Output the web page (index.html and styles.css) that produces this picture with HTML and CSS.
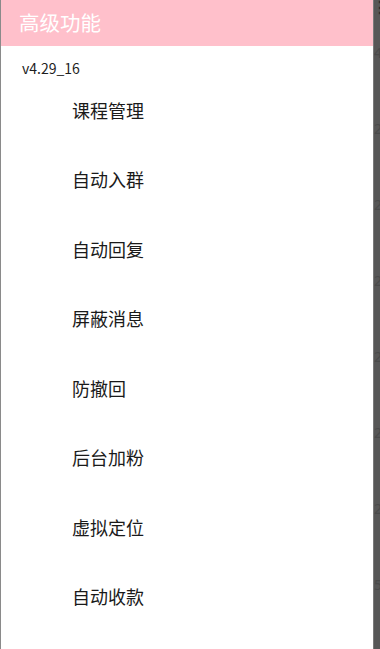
FILE: index.html
```html
<!DOCTYPE html>
<html lang="zh">
<head>
    <meta charset="utf-8">
    <title>高级功能</title>
    <link rel="stylesheet" href="styles.css">
</head>
<body>
    <div class="screen">
        <div class="edgeLeft"></div>

        <div class="drawer">
            <div class="header">高级功能</div>
            <div class="version">v4.29_16</div>
            <div class="menu">
                <div class="menuItem">课程管理</div>
                <div class="menuItem">自动入群</div>
                <div class="menuItem">自动回复</div>
                <div class="menuItem">屏蔽消息</div>
                <div class="menuItem">防撤回</div>
                <div class="menuItem">后台加粉</div>
                <div class="menuItem">虚拟定位</div>
                <div class="menuItem">自动收款</div>
            </div>
        </div>

        <div class="scrim">
            <div class="dots">⋮</div>
            <div class="ghost">4</div>
            <div class="ghost">2</div>
            <div class="ghost">2</div>
            <div class="ghost">2</div>
            <div class="ghost">2</div>
            <div class="ghost">2</div>
            <div class="ghost">2</div>
            <div class="ghost">5</div>
        </div>
    </div>
</body>
</html>
```

FILE: styles.css
```css
html, body
{
    margin:      0;
    padding:     0;
    background:  #5a5a5a;
}

.screen
{
    display:     flex;
    width:       380px;
    height:      649px;
    overflow:    hidden;
    font-family: "Noto Sans CJK SC", "Noto Sans", sans-serif;
}

.edgeLeft
{
    width:       1px;
    flex:        none;
    background:  #8a8a8a;
}

.drawer
{
    width:       372px;
    flex:        none;
    background:  #ffffff;
}

.header
{
    height:           46px;
    line-height:      44px;
    padding-left:     18px;
    background-color: #ffc0cb;
    color:            #ffffff;
    font-size:        20.5px;
}

.version
{
    height:       29px;
    padding-left: 21px;
    padding-top:  12px;
    box-sizing:   border-box;
    line-height:  20px;
    font-size:    14px;
    color:        #1e1e1e;
}

.menuItem
{
    height:       69.5px;
    display:      flex;
    align-items:  center;
    padding-left: 71px;
    font-size:    18px;
    color:        #1a1a1a;
}

.scrim
{
    flex:         1;
    border-left:  1px solid #7a7a7a;
    background:   #575757;
    color:        #4a4a4a;
    font-family:  "Noto Sans", sans-serif;
    font-size:    14px;
    overflow:     hidden;
}

.dots
{
    height:       42px;
    line-height:  14px;
    font-size:    16px;
    font-weight:  bold;
    color:        #2e2e2e;
    margin-left:  -2px;
}

.ghost
{
    height:       76px;
    line-height:  22px;
}
```
